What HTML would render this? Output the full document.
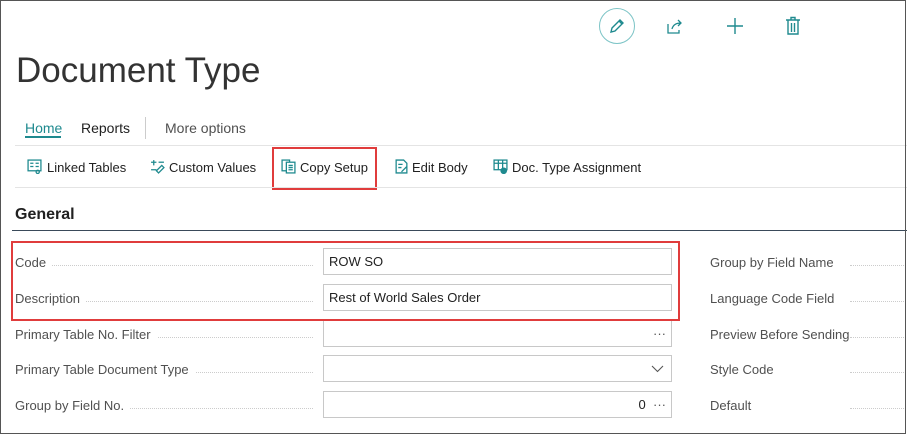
<!DOCTYPE html>
<html><head><style>
*{margin:0;padding:0;box-sizing:border-box}
body{width:907px;height:435px;background:#fff;font-family:"Liberation Sans",sans-serif;position:relative;overflow:hidden;color:#212121}
.frame{position:absolute;left:0;top:0;width:906px;height:434px;border:1.5px solid #555}
.abs{position:absolute;white-space:nowrap}
.lbl{position:absolute;left:15px;font-size:13px;color:#505050;width:300px;overflow:hidden}
.lbl span{background:#fff;padding-right:6px}
.dots{position:absolute;left:15px;width:298px;border-bottom:1.5px dotted #ccc}
.inp{position:absolute;left:323px;width:349px;height:27px;border:1px solid #c8c8c8;font-size:13px;padding:5px 5px;color:#212121}
.rl{position:absolute;left:710px;font-size:13px;color:#505050}
.rd{position:absolute;left:850px;width:56px;border-bottom:1.5px dotted #ccc}
.act{position:absolute;top:160px;font-size:13px;color:#212121}
.ic{position:absolute;top:159px;width:15px;height:15px}
</style></head><body>
<div class="frame"></div>
<div class="abs" style="left:599px;top:8px;width:36px;height:36px;border:1.3px solid #7cc4c6;border-radius:50%"></div>
<svg class="abs" style="left:607px;top:16px" width="20" height="20" viewBox="0 0 20 20" fill="none" stroke="#1f8a8f" stroke-width="1.4"><path d="M4 16l1-4 8-8 3 3-8 8z M12 5l3 3"/></svg>
<svg class="abs" style="left:665px;top:16px" width="20" height="20" viewBox="0 0 20 20" fill="none" stroke="#1f8a8f" stroke-width="1.3"><path d="M3 8v9h11v-3 M7 13c1-4 4-6 9-6 M13 4l3 3-3 3"/></svg>
<svg class="abs" style="left:725px;top:16px" width="20" height="20" viewBox="0 0 20 20" fill="none" stroke="#1f8a8f" stroke-width="1.4"><path d="M10 2v16M2 10h16"/></svg>
<svg class="abs" style="left:783px;top:15px" width="20" height="22" viewBox="0 0 20 22" fill="none" stroke="#1f8a8f" stroke-width="1.4"><path d="M3 5h14M8 5V2.5h4V5M5 5v14h10V5M8.5 8v9M11.5 8v9"/></svg>
<div class="abs" style="left:16px;top:51px;font-size:35px;color:#333">Document Type</div>
<div class="abs" style="left:25px;top:120px;font-size:14px;color:#1f8a8f">Home</div>
<div class="abs" style="left:25px;top:136px;width:36px;height:2px;background:#1f8a8f"></div>
<div class="abs" style="left:81px;top:120px;font-size:14px">Reports</div>
<div class="abs" style="left:145px;top:117px;width:1px;height:22px;background:#ccc"></div>
<div class="abs" style="left:165px;top:120px;font-size:14px;color:#505050">More options</div>
<div class="abs" style="left:15px;top:145px;width:892px;height:1px;background:#e4e4e4"></div>
<svg class="ic" style="left:27px" viewBox="0 0 14 14" fill="none" stroke="#1f8a8f" stroke-width="1.2"><rect x="1" y="1" width="12" height="10"/><path d="M3 4h3M3 7h3M8 4h3M8 7h3"/><circle cx="10" cy="12" r="1.5"/></svg>
<div class="act" style="left:47px">Linked Tables</div>
<svg class="ic" style="left:150px" viewBox="0 0 14 14" fill="none" stroke="#1f8a8f" stroke-width="1.2"><path d="M1 3h5M3.5 1v5M1 10h5M8 13l5-5-2-2-5 5z"/><path d="M8 3h5"/></svg>
<div class="act" style="left:169px">Custom Values</div>
<svg class="ic" style="left:281px" viewBox="0 0 14 14" fill="none" stroke="#1f8a8f" stroke-width="1.2"><rect x="1" y="1" width="7" height="10"/><rect x="5" y="3" width="8" height="10" fill="#fff"/><path d="M7 6h4M7 8h4M7 10h4"/></svg>
<div class="act" style="left:300px">Copy Setup</div>
<div class="abs" style="left:272px;top:147px;width:105px;height:43px;border:2px solid #e03c3c"></div>
<svg class="ic" style="left:394px" viewBox="0 0 14 14" fill="none" stroke="#1f8a8f" stroke-width="1.2"><path d="M2 1h7l3 3v9H2z M4 5h4M4 8h3 M7 12l5-5"/></svg>
<div class="act" style="left:412px">Edit Body</div>
<svg class="ic" style="left:493px" viewBox="0 0 14 14" fill="none" stroke="#1f8a8f" stroke-width="1.2"><rect x="1" y="1" width="12" height="9"/><path d="M1 4h12M5 1v9M9 1v9"/><circle cx="10" cy="11" r="2.5" fill="#1f8a8f"/></svg>
<div class="act" style="left:512px">Doc. Type Assignment</div>
<div class="abs" style="left:15px;top:187px;width:892px;height:1px;background:#e4e4e4"></div>
<div class="abs" style="left:15px;top:206px;font-size:16px;font-weight:bold;color:#212121">General</div>
<div class="abs" style="left:12px;top:230px;width:895px;height:1px;background:#3a4a5a"></div>
<div class="dots" style="top:265px"></div><div class="lbl" style="top:255px"><span>Code</span></div>
<div class="inp" style="top:248px">ROW SO</div>
<div class="dots" style="top:301px"></div><div class="lbl" style="top:291px"><span>Description</span></div>
<div class="inp" style="top:284px">Rest of World Sales Order</div>
<div class="dots" style="top:337px"></div><div class="lbl" style="top:327px"><span>Primary Table No. Filter</span></div>
<div class="inp" style="top:320px;text-align:right;color:#555">···</div>
<div class="dots" style="top:372px"></div><div class="lbl" style="top:362px"><span>Primary Table Document Type</span></div>
<div class="inp" style="top:355px"><svg style="position:absolute;right:7px;top:9px" width="13" height="8" viewBox="0 0 13 8" fill="none" stroke="#555" stroke-width="1.1"><path d="M1 1l5.5 5.5L12 1"/></svg></div>
<div class="dots" style="top:408px"></div><div class="lbl" style="top:398px"><span>Group by Field No.</span></div>
<div class="inp" style="top:391px;text-align:right">0 &nbsp;<span style="color:#555">···</span></div>
<div class="abs" style="left:11px;top:241px;width:669px;height:80px;border:2px solid #e03c3c"></div>
<div class="rd" style="top:265px"></div><div class="rl" style="top:255px">Group by Field Name</div>
<div class="rd" style="top:301px"></div><div class="rl" style="top:291px">Language Code Field</div>
<div class="rd" style="top:337px"></div><div class="rl" style="top:327px">Preview Before Sending</div>
<div class="rd" style="top:372px"></div><div class="rl" style="top:362px">Style Code</div>
<div class="rd" style="top:408px"></div><div class="rl" style="top:398px">Default</div>
<div class="frame" style="background:none"></div>
</body></html>
